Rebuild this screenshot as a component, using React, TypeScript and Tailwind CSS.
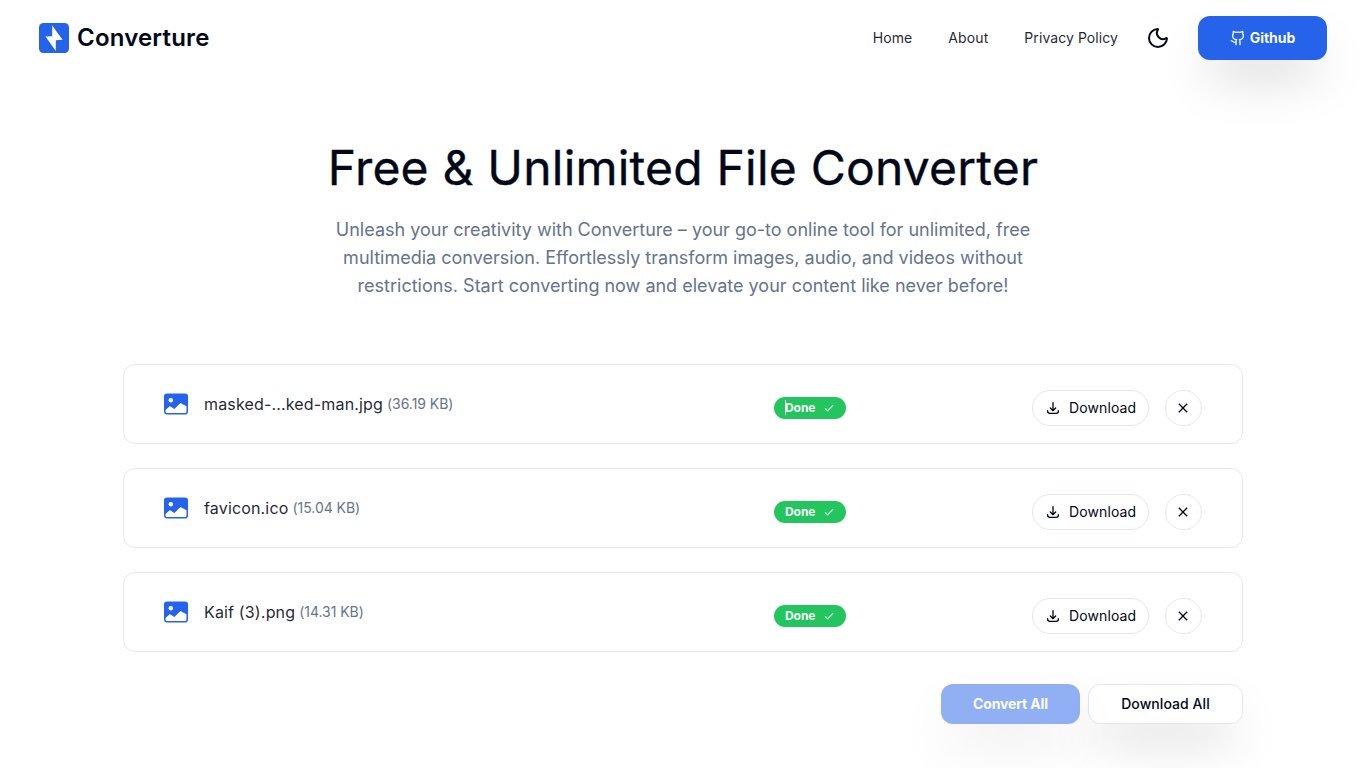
import { Moon } from "lucide-react";
import { BsImageFill } from "react-icons/bs";
import { HiOutlineDownload } from "react-icons/hi";
import { MdClose, MdDone } from "react-icons/md";
import { LuGithub } from "react-icons/lu";

type FileItem = { name: string; size: string; caret?: boolean };

const files: FileItem[] = [
  { name: "masked-...ked-man.jpg", size: "36.19 KB", caret: true },
  { name: "favicon.ico", size: "15.04 KB" },
  { name: "Kaif (3).png", size: "14.31 KB" },
];

function Logo() {
  return (
    <svg viewBox="0 0 30 30" className="h-[30px] w-[30px]">
      <rect width="30" height="30" rx="4.5" fill="#2563eb" />
      <path d="M13.2 2.3V13.2L6.5 13.5 16.8 27.9V17.3L23.6 16.8 18 9.2Z" fill="white" />
    </svg>
  );
}

function FileRow({ file }: { file: FileItem }) {
  return (
    <div className="flex h-20 items-center rounded-xl border border-[#e2e8f0] px-10">
      <BsImageFill className="h-6 w-6 shrink-0 text-[#2563eb]" />
      <div className="ml-4 flex w-[570px] items-center gap-1">
        <span className="text-base tracking-[0.01em] text-[#020817]/90">{file.name}</span>
        <span className="text-sm tracking-[-0.003em] text-[#64748b]">({file.size})</span>
      </div>
      <div className="mt-2 flex w-[258px]">
        <span className="relative inline-flex h-[22px] w-[72px] items-center justify-between rounded-full bg-[#22c55e] px-[11px] text-xs font-bold tracking-[-0.005em] text-[#f8fafc]">
          Done
          {file.caret && <i className="absolute top-[3px] left-[11px] h-[15px] w-px bg-white" />}
          <MdDone className="h-3 w-3" />
        </span>
      </div>
      <button className="mt-2 flex h-9 w-[117px] shrink-0 items-center rounded-full border border-[#e2e8f0] pl-3 text-sm tracking-[0.008em]">
        <HiOutlineDownload className="mr-2 h-4 w-4" />
        Download
      </button>
      <button className="mt-2 ml-4 flex h-9 w-[37px] shrink-0 items-center justify-center rounded-full border border-[#e2e8f0] pr-px">
        <MdClose className="h-4 w-4" />
      </button>
    </div>
  );
}

export default function App() {
  return (
    <div className="h-screen overflow-hidden bg-white font-['Inter',sans-serif] text-[#020817]">
      <header className="flex h-19 items-center justify-between px-[39px]">
        <div className="flex items-center gap-2">
          <Logo />
          <span className="text-2xl font-semibold tracking-[0.008em]">Converture</span>
        </div>
        <nav className="flex items-center text-sm">
          <a className="mr-9 tracking-[0.006em] text-[#020817]/90">Home</a>
          <a className="mr-9 tracking-[0.008em] text-[#020817]/90">About</a>
          <a className="mr-7 tracking-[0.005em] text-[#020817]/90">Privacy Policy</a>
          <Moon className="mr-7 h-6 w-6" />
          <button className="flex h-11 w-[129px] items-center justify-center gap-1 rounded-xl bg-[#2563eb] font-bold text-[#f8fafc] shadow-2xl">
            <LuGithub className="h-4 w-4" />
            Github
          </button>
        </nav>
      </header>
      <main className="mx-auto w-[1120px]">
        <section className="mx-auto w-[720px] pt-[68px] text-center">
          <h1 className="text-5xl leading-[48px] font-normal tracking-[0.21px] [-webkit-text-stroke:0.35px_#020817]">Free &amp; Unlimited File Converter</h1>
          <p className="mt-6 text-lg leading-7 text-[#64748b]">
            Unleash your creativity with Converture – your go-to online tool for unlimited, free
            <br />
            multimedia conversion. Effortlessly transform images, audio, and videos without
            <br />
            restrictions. Start converting now and elevate your content like never before!
          </p>
        </section>
        <section className="mt-16 flex flex-col gap-6">
          {files.map((f) => (
            <FileRow key={f.name} file={f} />
          ))}
        </section>
        <div className="mt-8 flex justify-end gap-2 text-sm">
          <button className="h-10 w-[139px] rounded-xl bg-[#2563eb] font-bold tracking-[-0.01em] text-[#f8fafc] opacity-50 shadow-2xl">Convert All</button>
          <button className="h-10 w-[155px] rounded-xl border border-[#e2e8f0] bg-white font-medium tracking-[0.005em] shadow-2xl">Download All</button>
        </div>
      </main>
    </div>
  );
}
